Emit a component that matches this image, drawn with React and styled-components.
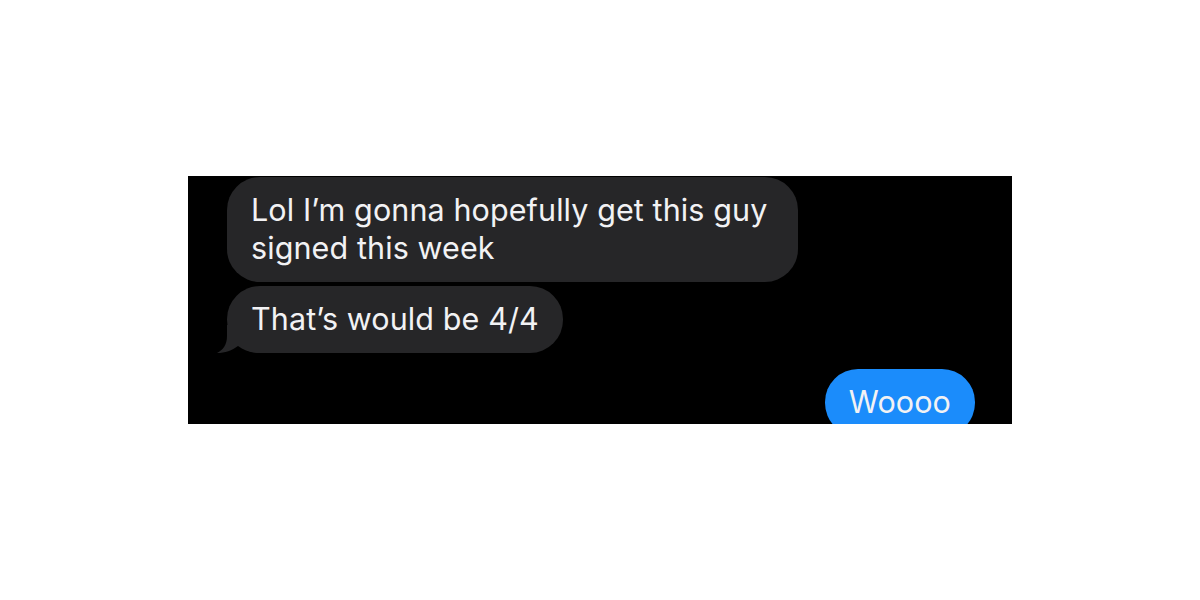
import React from 'react';
import styled, { createGlobalStyle } from 'styled-components';

const GlobalStyle = createGlobalStyle`
  html, body {
    margin: 0;
    padding: 0;
    background: #ffffff;
  }
  body {
    font-family: Inter, "Noto Sans", "Liberation Sans", sans-serif;
  }
`;

const messages = [
  { id: 1, from: 'them', text: 'Lol I’m gonna hopefully get this guy signed this week' },
  { id: 2, from: 'them', text: 'That’s would be 4/4', tail: true },
  { id: 3, from: 'me', text: 'Woooo' }
];

export default function App() {
  return (
    <Page>
      <GlobalStyle />
      <Thread>
        {messages.map((m, i) => (
          <Row key={m.id} mine={m.from === 'me'} spaced={i > 0 && messages[i - 1].from !== m.from}>
            <Bubble mine={m.from === 'me'}>
              {m.tail ? <Tail /> : null}
              <Text>{m.text}</Text>
            </Bubble>
          </Row>
        ))}
      </Thread>
    </Page>
  );
}

function Tail() {
  return (
    <TailSvg viewBox="0 0 44 28" width="44" height="28">
      <path
        d="M10 0 L10 11 C10 20 6 25 0 28 C8 28 15 25.5 21 21 C27 25.5 34 28 44 28 L44 0 Z"
        fill="#262628"
      />
    </TailSvg>
  );
}

const Page = styled.div `
  width: 1200px;
  height: 600px;
  display: flex;
  align-items: flex-start;
  justify-content: center;
  padding-top: 176px;
  box-sizing: border-box;
`;

const Thread = styled.div `
  width: 824px;
  height: 248px;
  background: #000000;
  overflow: hidden;
  display: flex;
  flex-direction: column;
  gap: 4px;
  padding: 1px 37px 0 39px;
  box-sizing: border-box;
`;

const Row = styled.div `
  display: flex;
  justify-content: ${(p) => (p.mine ? 'flex-end' : 'flex-start')};
  margin-top: ${(p) => (p.spaced ? '12px' : '0')};
`;

const Bubble = styled.div `
  position: relative;
  box-sizing: border-box;
  max-width: 571px;
  padding: 14px 24px 15px 24px;
  border-radius: 33px;
  background: ${(p) => (p.mine ? '#1b8cfb' : '#262628')};
  color: #f2f2f4;
  font-size: 30.5px;
  line-height: 38px;
  letter-spacing: 0.1px;
`;

const Text = styled.span `
  position: relative;
`;

const TailSvg = styled.svg `
  position: absolute;
  left: -10px;
  bottom: 0;
  display: block;
`;
